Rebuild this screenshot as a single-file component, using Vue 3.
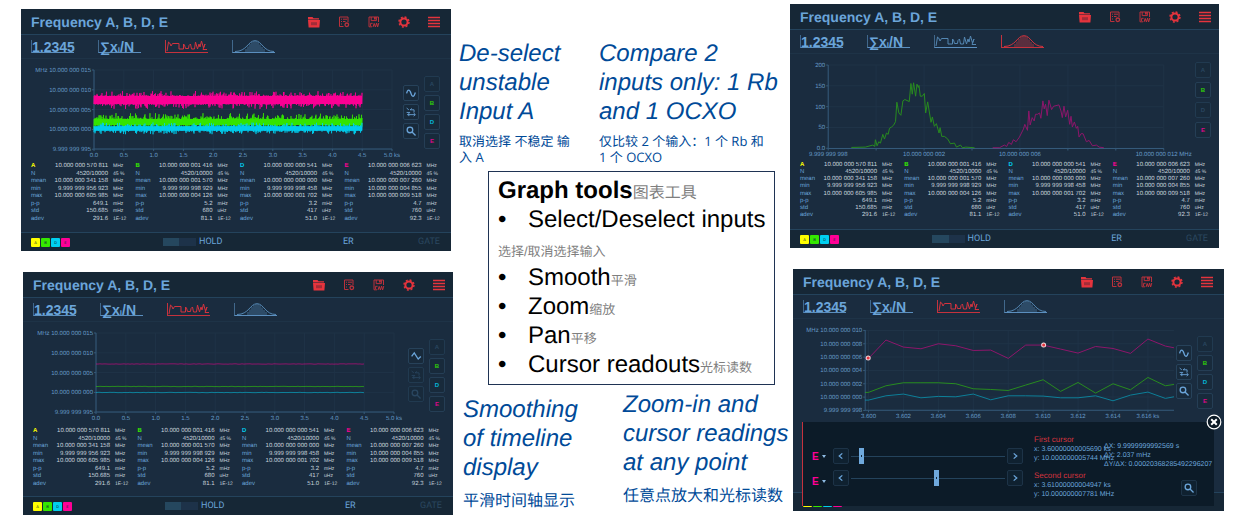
<template>
  <main class="page">
    <div v-for="(column, c) in columns" :key="c" :class="['column', 'column-' + c]">
      <section v-for="panel in column" :key="panel.id" :class="['panel', panel.id]">
        <header class="bar">
          <h2>Frequency A, B, D, E</h2>
          <nav class="actions">
            <button aria-label="Open">
              <svg viewBox="0 0 12 12">
                <path fill="currentColor" d="M0 1h4.5l1 1.2H11V3.4H0z M0 4h12l-.6 7.5H.6z" />
                <path class="cut" d="M3 6.2h6v3H3z" />
              </svg>
            </button>
            <button class="faint" aria-label="Presets">
              <svg viewBox="0 0 12 12" class="line">
                <path d="M5.5 10.5H1.5V1h8.5v5M3 3.2h1M5 3.2h4M3 5.5h1M5 5.5h2.5M3 8h1" />
                <circle cx="8.8" cy="8.8" r="1.8" stroke-width="1.3" />
              </svg>
            </button>
            <button class="faint" aria-label="Save">
              <svg viewBox="0 0 12 12" class="line">
                <path d="M4 10.8H1V1h9.5v5M3.2 1v3.6h5.2V1M2.6 10V7.3h2M5 11l1.2-3.6L7.4 11l1.2-4 1 4 1.2-4" />
                <path d="M6.9 1v2.6" stroke-width="1.8" />
              </svg>
            </button>
            <button aria-label="Settings">
              <svg viewBox="0 0 12 12" fill="none" stroke="currentColor">
                <circle cx="6" cy="6" r="3.6" stroke-width="2" />
                <circle cx="6" cy="6" r="5" stroke-width="1.4" stroke-dasharray="2 1.93" />
              </svg>
            </button>
            <button aria-label="Menu">
              <svg viewBox="0 0 12 12" fill="none" stroke="currentColor" stroke-width="1.3">
                <path d="M0 1.5h12M0 4.5h12M0 7.5h12M0 10.5h12" />
              </svg>
            </button>
          </nav>
        </header>

        <div class="tabs">
          <button class="tab">1.2345</button>
          <button class="tab mean">∑x<small>i</small>/N</button>
          <button :class="['tab', { active: panel.type !== 'histogram' }]" aria-label="Timeline">
            <svg viewBox="0 0 42 12" class="line">
              <path d="M1 11L2.5 2l1.200 1L5 6l1.500-2.500h6.500V9h4.500V4l1 1 1 3.500h3l.5-3 1.500-1.500 1 5h3l1-7 2 7 1.500-5 1 3 1.500-6 2 7 1.500-4L37 9.500h4" />
            </svg>
          </button>
          <button :class="['tab', { active: panel.type === 'histogram' }]" aria-label="Distribution">
            <svg viewBox="0 0 42 12" class="line">
              <path d="M2 11.5C14 11.5 15 .7 22 .7S30 11.5 41 11.5" />
              <path stroke-width=".7" d="M13 9v3M15 6.5V12M17 4V12M19 2V12M21 1V12M23 1V12M25 2V12M27 4.500V12M29 7V12M31 9v3" />
            </svg>
          </button>
        </div>

        <div class="plot">
          <svg class="chart" :viewBox="`0 0 ${panel.width} ${panel.height}`">
            <g class="gridlines">
              <path v-for="t in panel.xTicks" :key="t.x" :d="`M${t.x} ${panel.top}V${panel.bottom}`" />
              <path v-for="t in panel.yTicks" :key="t.y" :d="`M${panel.left} ${t.y}H${panel.right}`" />
            </g>
            <path class="axis" :d="`M${panel.left} ${panel.top}V${panel.bottom}H${panel.right}`" />
            <path v-for="t in panel.yTicks" :key="t.y" class="axis" :d="`M${panel.left - 2} ${t.y}h2`" />
            <path v-for="t in panel.xTicks" :key="t.x" class="axis" :d="`M${t.x} ${panel.bottom}v2`" />
            <text v-for="t in panel.yTicks" :key="t.y" :x="panel.left - 3" :y="t.y + 2" text-anchor="end">{{ t.label }}</text>
            <text v-for="t in panel.xTicks" :key="t.x" :x="t.x" :y="panel.bottom + 8" text-anchor="middle">{{ t.label }}</text>

            <path
                v-for="s in panel.series"
                :key="s.color"
                :class="['trace', s.color, panel.type]"
                :d="s.path"
                :transform="panel.type === 'histogram' ? 'translate(-5 -54) scale(.3333)' : null"
            />
            <template v-if="panel.type === 'zoomed'">
              <circle class="marker" cx="75" cy="39" r="2" />
              <circle class="marker" cx="250" cy="26" r="2" />
            </template>
          </svg>

          <div v-if="panel.type !== 'histogram'" class="tools">
            <button aria-label="Smooth">
              <svg viewBox="0 0 16 16" class="line thick">
                <path v-if="panel.type === 'smooth'" d="M3 8.500l3-4L10.500 11.500l3-3" />
                <path v-else d="M3 8.500c1-5 3.500-5 5 0s3.500 4 5-1" />
              </svg>
            </button>
            <button aria-label="Pan" :disabled="panel.type === 'smooth'">
              <svg viewBox="0 0 16 16" class="line">
                <path d="M3 3.500l2.500 2M7 5.500h4.500v3M9 4L7 5.500M3 8.500h4M3.500 11h9M11 9.200l2 1.800-2 1.700M5.500 9.200v3.500" />
              </svg>
            </button>
            <button aria-label="Zoom" :disabled="panel.type === 'smooth'">
              <svg viewBox="0 0 16 16" class="line thick">
                <circle cx="6.8" cy="6.8" r="3.2" />
                <path d="M9.200 9.200l4 4" />
              </svg>
            </button>
          </div>
          <div class="channels">
            <button
                v-for="ch in channels"
                :key="ch.name"
                :class="ch.color"
                :disabled="panel.off.includes(ch.name)"
            >{{ ch.name }}</button>
          </div>
        </div>

        <div class="stats">
          <table v-for="ch in channels" :key="ch.name">
            <tbody>
              <tr v-for="(row, i) in ch.rows" :key="i">
                <th :class="i ? 'name' : ch.color">{{ i ? names[i] : ch.name }}</th>
                <td>{{ row[0] }}</td>
                <td class="unit">{{ row[1] }}</td>
              </tr>
            </tbody>
          </table>
        </div>

        <footer class="status">
          <div class="badges">
            <span v-for="ch in channels" :key="ch.name" :class="['badge', ch.color]">{{ ch.name }}</span>
          </div>
          <div class="meter"></div>
          <span>HOLD</span>
          <span>ER</span>
          <span class="gate">GATE</span>
        </footer>

        <div v-if="panel.type === 'zoomed'" class="cursors">
          <div class="selects">
            <label v-for="n in 2" :key="n">
              <select :aria-label="'Cursor ' + n + ' input'">
                <option>E</option>
              </select>
              <i></i>
            </label>
          </div>
          <div class="sliders">
            <div v-for="(value, n) in [5.5, 55.5]" :key="n" class="slider">
              <button aria-label="Previous"><svg viewBox="0 0 16 16" class="line thick"><path d="M9.5 5L6 8l3.5 3" /></svg></button>
              <input type="range" min="0" max="100" step="any" :value="value" :aria-label="'Cursor ' + (n + 1)">
              <button aria-label="Next"><svg viewBox="0 0 16 16" class="line thick"><path d="M6.5 5L10 8l-3.5 3" /></svg></button>
            </div>
          </div>
          <div class="readouts">
            <h3>First cursor</h3>
            <p>x: 3.60000000005690 ks</p>
            <p>y: 10.000000005744 MHz</p>
            <h3>Second cursor</h3>
            <p>x: 3.61000000004947 ks</p>
            <p>y: 10.000000007781 MHz</p>
          </div>
          <div class="deltas">
            <p>ΔX: 9.9999999992569 s</p>
            <p>ΔY: 2.037 mHz</p>
            <p>ΔY/ΔX: 0.00020368285492296207</p>
            <button aria-label="Zoom to cursors">
              <svg viewBox="0 0 16 16" class="line thick"><circle cx="6.8" cy="6.8" r="3.2" /><path d="M9.200 9.200l4 4" /></svg>
            </button>
          </div>
          <button class="close" aria-label="Close">
            <svg viewBox="0 0 16 16" fill="none" stroke="#fff">
              <circle cx="8" cy="8" r="6.8" fill="#0b1925" stroke-width="1.2" />
              <path d="M5.200 5.200l5.600 5.600M10.800 5.200l-5.600 5.600" stroke-width="2" />
            </svg>
          </button>
        </div>
      </section>
    </div>

    <article class="notes">
      <div class="callouts top">
        <div>
          <h1>De-select<br>unstable<br>Input A</h1>
          <p>取消选择 不稳定 输<br>入 A</p>
        </div>
        <div>
          <h1>Compare 2<br>inputs only: 1 Rb<br>and 1 OCXO</h1>
          <p>仅比较 2 个输入：1 个 Rb 和<br>1 个 OCXO</p>
        </div>
      </div>
      <div class="box">
        <h2>Graph tools<small>图表工具</small></h2>
        <ul>
          <li>Select/Deselect inputs</li>
          <li class="plain"><small>选择/取消选择输入</small></li>
          <li>Smooth<small>平滑</small></li>
          <li>Zoom<small>缩放</small></li>
          <li>Pan<small>平移</small></li>
          <li>Cursor readouts<small>光标读数</small></li>
        </ul>
      </div>
      <div class="callouts bottom">
        <div>
          <h1>Smoothing<br>of timeline<br>display</h1>
          <p>平滑时间轴显示</p>
        </div>
        <div>
          <h1>Zoom-in and<br>cursor readings<br>at any point</h1>
          <p>任意点放大和光标读数</p>
        </div>
      </div>
    </article>
  </main>
</template>

<script setup>
const names = ['', 'N', 'mean', 'min', 'max', 'p-p', 'std', 'adev']

const channels = [
  {
    name: 'A',
    color: 'yellow',
    rows: [
      ['10.000 000 570 811', 'MHz'], ['4520/10000', '45 %'], ['10.000 000 341 158', 'MHz'],
      ['9.999 999 956 923', 'MHz'], ['10.000 000 605 985', 'MHz'], ['649.1', 'mHz'],
      ['150.685', 'mHz'], ['291.6', '1E-12']
    ]
  },
  {
    name: 'B',
    color: 'green',
    rows: [
      ['10.000 000 001 416', 'MHz'], ['4520/10000', '45 %'], ['10.000 000 001 570', 'MHz'],
      ['9.999 999 998 929', 'MHz'], ['10.000 000 004 126', 'MHz'], ['5.2', 'mHz'],
      ['680', 'uHz'], ['81.1', '1E-12']
    ]
  },
  {
    name: 'D',
    color: 'cyan',
    rows: [
      ['10.000 000 000 541', 'MHz'], ['4520/10000', '45 %'], ['10.000 000 000 000', 'MHz'],
      ['9.999 999 998 458', 'MHz'], ['10.000 000 001 702', 'MHz'], ['3.2', 'mHz'],
      ['417', 'uHz'], ['51.0', '1E-12']
    ]
  },
  {
    name: 'E',
    color: 'pink',
    rows: [
      ['10.000 000 006 623', 'MHz'], ['4520/10000', '45 %'], ['10.000 000 007 260', 'MHz'],
      ['10.000 000 004 855', 'MHz'], ['10.000 000 009 518', 'MHz'], ['4.7', 'mHz'],
      ['760', 'uHz'], ['92.3', '1E-12']
    ]
  }
]

// Small seeded generator, so the noise is the same on every load
let seed = 7
const random = () => {
  seed = (seed * 16807) % 2147483647
  return seed / 2147483647
}

const noise = (center, half, spike) => {
  let d = ''
  for (let x = 73; x <= 341; x += 0.5) {
    const up = half + spike * random() ** 6
    const down = half + spike * random() ** 6
    d += `${d ? 'L' : 'M'}${x} ${(center - up).toFixed(1)}V${(center + down).toFixed(1)}`
  }
  return d
}

const flat = (center) => {
  let d = ''
  for (let x = 73; x <= 341; x += 2) {
    d += `${d ? 'L' : 'M'}${x} ${(center + (random() - 0.5) * 0.4).toFixed(2)}`
  }
  return d
}

// Readings in mHz above 10 MHz, one every second
const readings = (values) => values
    .map((v, i) => [Math.min(75.3 + i * 17.42, 380), 11.4 + (10 - v) * 6.65])
    .map(([x, y], i) => `${i ? 'L' : `M72 ${y.toFixed(1)}L`}${x.toFixed(1)} ${y.toFixed(1)}`)
    .join('')

const timeTicks = ['0.0', '0.5', '1.0', '1.5', '2.0', '2.5', '3.0', '3.5', '4.0', '4.5', '5.0 ks']
    .map((label, i) => ({ label, x: 73 + i * 29.8 }))
const levelTicks = ['MHz 10.000 000 015', '10.000 000 010', '10.000 000 005', '10.000 000 000', '9.999 999 995']
    .map((label, i) => ({ label, y: 11 + i * 19.8 }))

const timeline = {
  id: 'timeline',
  type: 'noisy',
  width: 382,
  height: 104,
  left: 73,
  right: 371,
  top: 11,
  bottom: 90,
  off: ['A'],
  xTicks: timeTicks,
  yTicks: levelTicks,
  series: [
    { color: 'green', path: noise(63, 3, 6) },
    { color: 'cyan', path: noise(69.5, 2, 4) },
    { color: 'pink', path: noise(41, 4, 5) }
  ]
}

const smoothed = {
  ...timeline,
  id: 'smoothed',
  type: 'smooth',
  width: 385,
  height: 106,
  series: [
    { color: 'green', path: flat(64.5) },
    { color: 'cyan', path: flat(70.5) },
    { color: 'pink', path: flat(42) }
  ]
}

const histogram = {
  id: 'distribution',
  type: 'histogram',
  width: 403,
  height: 107,
  left: 38,
  right: 372,
  top: 11,
  bottom: 94,
  off: ['A', 'D'],
  xTicks: ['9.999 999 998', '', '10.000 000 002', '', '10.000 000 006', '', '', '10.000 000 012 MHz']
      .map((label, i) => ({ label, x: 38 + i * 47.7 })),
  yTicks: ['200', '150', '100', '50', '0.0'].map((label, i) => ({ label, y: 11 + i * 20.7 })),
  series: [
    {
      color: 'green',
      path: 'M198 441L240 440 262 434 268 438 270 418 275 436 280 424 285 428 292 402 297 416 303 398 308 402 312 384 318 380 324 375 330 364 334 306 340 338 346 345 352 302 358 298 371 304 376 250 380 282 384 248 390 288 394 252 398 262 400 256 404 288 410 288 416 280 420 338 426 305 436 366 440 350 446 378 452 370 460 398 463 382 468 408 476 408 486 416 494 430 506 428 512 440 524 434 530 442 540 440 566 442'
    },
    {
      color: 'pink',
      path: 'M620 442L640 442 655 434 662 438 668 426 676 432 682 418 690 424 700 410 712 386 716 372 724 390 728 332 732 374 738 352 744 362 748 342 754 342 760 338 764 354 770 302 774 326 778 312 783 346 788 300 796 328 802 318 818 314 824 332 828 352 833 318 838 350 844 330 850 372 854 348 858 380 864 365 870 384 874 378 878 410 884 400 890 400 900 424 908 420 918 436 930 434 938 440 952 442'
    }
  ]
}

const zoomed = {
  id: 'zoomed',
  type: 'zoomed',
  width: 382,
  height: 104,
  left: 72,
  right: 380,
  top: 11,
  bottom: 91,
  off: ['A'],
  xTicks: ['3.600', '3.602', '3.604', '3.606', '3.608', '3.610', '3.612', '3.614', '3.616 ks']
      .map((label, i) => ({ label, x: 75.3 + i * 34.84 })),
  yTicks: ['MHz 10.000 000 010', '10.000 000 008', '10.000 000 006', '10.000 000 004', '10.000 000 002', '10.000 000 000', '9.999 999 998']
      .map((label, i) => ({ label, y: 11.4 + i * 13.3 })),
  series: [
    { color: 'green', path: readings([0.7, 1.7, 2.15, 2.15, 2.15, 2, 1.25, 1.15, 1, 1.8, 2.6, 0.85, 2.2, 0.6, 2, 1.1, 2.95, 1.7, 1.9]) },
    { color: 'cyan', path: readings([-0.45, 0.2, 0.45, -0.1, 0.1, 0.05, 0.45, -0.4, 0.2, 0.2, 0.15, -0.1, -0.1, 0.2, -0.55, 0.3, 0.75, -0.2, 0.05]) },
    { color: 'pink', path: readings([5.8, 8.55, 7.5, 7.25, 8, 7.7, 7, 7.05, 5.8, 7.8, 7.8, 7.2, 6.6, 7.6, 7.3, 6.55, 8.7, 7.65, 7.4]) }
  ]
}

const columns = [[timeline, smoothed], [histogram, zoomed]]
</script>

<style>
body {
  background-color: white;
}
</style>

<style scoped>
.page {
  display: grid;
  grid-template-columns: minmax(0, 432fr) minmax(0, 337fr) minmax(0, 434fr);
  padding: 0 21px;
  font-family: "Liberation Sans", "Noto Sans CJK SC", sans-serif;
  text-rendering: geometricPrecision;
}
h1, h2, h3, p, ul {
  margin: 0;
  padding: 0;
}
button {
  padding: 0;
  border: none;
  background: none;
  color: inherit;
  font-family: inherit;
}
svg {
  display: block;
  width: 100%;
}
.line {
  fill: none;
  stroke: currentColor;
  stroke-width: 1;
}
.thick {
  stroke-width: 1.5;
}

/* Instrument screens */
.column {
  display: flex;
  flex-direction: column;
  gap: 21px;
}
.column-0 {
  padding-top: 9px;
}
.column-1 {
  grid-column: 3;
  padding-top: 4px;
}
.panel {
  position: relative;
  display: flex;
  flex-direction: column;
  min-height: 242px;
  background-color: #1a2c3f;
  color: #6ba5da;
}
.timeline {
  margin-right: 2px;
}
.smoothed {
  margin-left: 2px;
  min-height: 243px;
}
.distribution {
  margin-right: 5px;
  min-height: 244px;
}
.zoomed.panel {
  margin-left: 3px;
}
.bar {
  display: flex;
  justify-content: space-between;
  align-items: center;
  height: 26px;
  padding: 0 11px 0 10px;
  box-sizing: border-box;
  border-bottom: 1px solid #24435c;
  background-color: #162736;
}
.smoothed .bar, .distribution .bar {
  padding-right: 8px;
}
.bar h2 {
  font-size: 14px;
  line-height: 16px;
}
.actions {
  display: flex;
  gap: 18px;
  color: #e5343d;
}
.actions button {
  width: 12px;
  height: 12px;
}
.actions .faint {
  opacity: 0.8;
}
.cut {
  fill: #a32c38;
}
.tabs {
  display: flex;
  align-items: center;
  gap: 24px;
  height: 24px;
  padding-left: 10px;
  box-sizing: border-box;
  border-bottom: 1px solid #1e3347;
}
.tab {
  width: 43px;
  height: 13px;
  border-left: 1px solid #41688c;
  border-bottom: 1px solid #5b8fbf;
  font-size: 14px;
  font-weight: bold;
  line-height: 14px;
  text-align: left;
  white-space: nowrap;
}
.tab.mean {
  padding-left: 1px;
}
.tab small {
  font-size: 8px;
}
.tab svg {
  color: #5487b3;
}
.tab.active {
  border-color: #c5323d;
}
.tab.active svg {
  color: #d2333e;
}
.plot {
  display: flex;
  align-items: flex-start;
}
.chart {
  flex: 1;
  min-width: 0;
  overflow: visible;
}
.chart text {
  fill: #669ac6;
  font-size: 6px;
}
.gridlines path {
  stroke: #1f3347;
}
.axis {
  fill: none;
  stroke: #355a7a;
}
.trace {
  fill: none;
  stroke: currentColor;
  stroke-width: 1;
}
.trace.noisy {
  stroke-width: 0.7;
}
.trace.smooth, .trace.zoomed, .trace.histogram {
  opacity: 0.5;
  vector-effect: non-scaling-stroke;
}
.marker {
  fill: #e5343d;
  stroke: #f3d6d8;
  stroke-width: 1;
}
.yellow {
  color: #ffff00;
}
.green {
  color: #35e800;
}
.cyan {
  color: #00d0f0;
}
.pink {
  color: #ff0096;
}
.tools, .channels {
  display: flex;
  flex-direction: column;
  gap: 3px;
}
.tools {
  padding: 26px 5px 0 0;
}
.channels {
  padding: 17px 11px 0 0;
}
.smoothed .channels {
  padding-right: 8px;
}
.distribution .channels {
  gap: 4px;
  padding: 8px 8px 0 0;
}
.tools button, .channels button, .slider button, .deltas button {
  width: 16px;
  height: 16px;
  border: 1px solid #27425a;
  border-radius: 2px;
  background-color: #182a3b;
}
.channels button {
  font-size: 6px;
  font-weight: bold;
}
.channels button:not(:disabled) {
  opacity: 0.85;
}
.tools button:disabled, .channels button:disabled {
  border-color: #213a50;
  color: #294660;
}

/* Statistics */
.stats {
  display: flex;
  padding: 0 2px 0 10px;
}
.stats table {
  flex: 1;
  height: 60px;
  border-collapse: collapse;
  table-layout: fixed;
  width: 25%;
  font-size: 6px;
  line-height: 7px;
}
.distribution table {
  height: 58px;
}
.stats th, .stats td {
  padding: 0;
  white-space: nowrap;
}
.stats th {
  width: 20px;
  text-align: left;
}
.stats .name {
  font-weight: normal;
}
.stats td {
  width: 57px;
  color: #c8d4de;
  text-align: right;
}
.stats .unit {
  width: auto;
  padding-left: 5px;
  font-size: 5px;
  text-align: left;
}
.status {
  display: grid;
  grid-template-columns: 132fr 36fr 144fr 75fr 22fr;
  align-items: center;
  height: 19px;
  margin-top: auto;
  padding: 0 11px 0 10px;
  box-sizing: border-box;
  border-top: 1px solid #24435c;
  background-color: #162736;
  font-family: "Liberation Sans Narrow", Roboto, sans-serif;
  font-size: 9px;
}
.badges {
  display: flex;
  gap: 1px;
}
.badge {
  width: 9px;
  height: 9px;
  border-radius: 1px;
  background-color: currentColor;
  font-size: 4px;
  line-height: 9px;
  text-align: center;
}
.badge::first-letter {
  color: #12283a;
}
.meter {
  width: 33px;
  height: 8px;
  background: linear-gradient(to right, #25475e 50%, #1d3249 50%);
}
.gate {
  color: #2b4860;
}

/* Cursor drawer over the lower half of the screen */
.cursors {
  position: absolute;
  top: 153px;
  right: 10px;
  bottom: 5px;
  left: 9px;
  display: flex;
  border-left: 1px solid #c5323d;
  padding-left: 9px;
  background-color: #0c1b28;
}
.selects {
  display: flex;
  flex-direction: column;
  gap: 9px;
  width: 21px;
  padding-top: 26px;
}
.selects label {
  display: flex;
  align-items: center;
  gap: 3px;
  height: 16px;
}
.selects select {
  width: 7px;
  padding: 0;
  border: none;
  appearance: none;
  background: none;
  color: #ff0096;
  font-family: inherit;
  font-size: 10px;
  font-weight: bold;
}
.selects i {
  border: 2px solid transparent;
  border-top: 3px solid #8fbce4;
  border-bottom: 0;
}
.sliders {
  flex: 1;
  display: flex;
  flex-direction: column;
  gap: 6px;
  padding-top: 26px;
}
.slider {
  display: flex;
  gap: 2px;
}
.slider button, .deltas button {
  border-color: #1d3347;
  background-color: #0f2130;
}
.slider input {
  flex: 1;
  min-width: 0;
  height: 16px;
  margin: 0;
  appearance: none;
  background: linear-gradient(#24435c, #24435c) center / 100% 1px no-repeat;
}
.slider input::-webkit-slider-thumb {
  appearance: none;
  width: 5px;
  height: 16px;
  background: radial-gradient(circle, #12283a 1px, #6fa9dd 1px);
}
.readouts {
  width: 70px;
  padding: 13px 0 0 11px;
  font-size: 7px;
  line-height: 9px;
  white-space: nowrap;
}
.readouts h3 {
  color: #d2333e;
  font-size: 8px;
  font-weight: normal;
  line-height: 10px;
}
.readouts p + h3 {
  margin-top: 8px;
}
.deltas {
  width: 110px;
  padding-top: 20px;
  font-size: 7px;
  line-height: 9px;
  white-space: nowrap;
}
.deltas button {
  display: block;
  margin: 11px 17px 0 auto;
}
.close {
  position: absolute;
  top: -8px;
  right: -8px;
  width: 16px;
  height: 16px;
}

/* Notes between the screens */
.notes {
  grid-column: 2;
  grid-row: 1;
}
.callouts {
  display: flex;
  color: #004a98;
  white-space: nowrap;
}
.callouts h1 {
  font-size: 24px;
  font-style: italic;
  font-weight: normal;
  line-height: 29px;
}
.top {
  padding: 39px 0 0 6px;
}
.top div:first-child {
  width: 140px;
}
.top p {
  margin-top: 7px;
  font-family: "Open Sans", "Noto Sans CJK SC", sans-serif;
  font-size: 13px;
  line-height: 16px;
}
.box {
  margin: 6px 15px 0 35px;
  padding: 4px 9px 5px;
  border: 1px solid #1f3354;
  color: black;
  white-space: nowrap;
}
.box h2, .box li {
  font-size: 24px;
  line-height: 29px;
  height: 29px;
}
.box small {
  color: #7f7f7f;
  font-size: 13px;
  font-weight: normal;
}
.box h2 small {
  font-size: 16px;
}
.box ul {
  list-style: none;
}
.box li::before {
  content: "•";
  display: inline-block;
  width: 30px;
}
.box li.plain::before {
  content: none;
}
.bottom {
  padding: 5px 0 0 10px;
}
.bottom div:first-child {
  width: 160px;
  padding-top: 5px;
}
.bottom p {
  margin-top: 8px;
  font-size: 16px;
  line-height: 24px;
}
</style>
